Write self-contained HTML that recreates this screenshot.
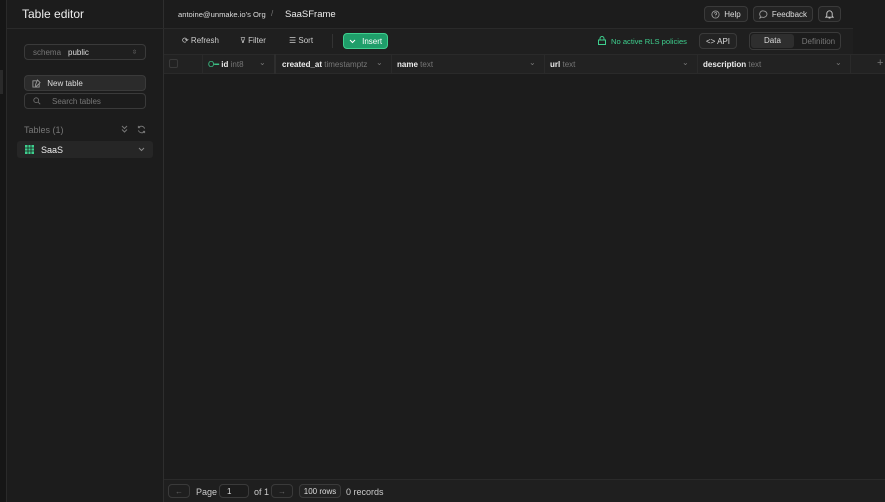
<!DOCTYPE html><html><head><style>
*{box-sizing:border-box;margin:0;padding:0}
body{width:885px;height:502px;overflow:hidden;background:#1c1c1c;font-family:"Liberation Sans",sans-serif;color:#ededed;position:relative;font-size:8px}
.a{position:absolute}
.btn{position:absolute;border:1px solid #3a3a3a;border-radius:4px;background:#232323;display:flex;align-items:center;justify-content:center;gap:4px;color:#ddd;font-size:8px}
.mut{color:#777}
</style></head><body>
<div class="a" style="left:0;top:0;width:7px;height:502px;background:#161616;border-right:1px solid #2a2a2a"></div>
<div class="a" style="left:0;top:70px;width:3px;height:24px;background:#2a2a2a"></div>
<div class="a" style="left:7px;top:0;width:157px;height:502px;background:#1c1c1c;border-right:1px solid #2e2e2e"></div>
<div class="a" style="left:7px;top:28px;width:157px;height:1px;background:#2a2a2a"></div>
<div class="a" style="left:22px;top:7px;font-size:12px;color:#eee">Table editor</div>
<div class="btn" style="left:24px;top:44px;width:122px;height:16px;justify-content:flex-start;padding-left:8px;gap:7px;background:#1f1f1f"><span class="mut">schema</span><span>public</span><span class="a mut" style="right:8px;font-size:6px">⇳</span></div>
<div class="btn" style="left:24px;top:75px;width:122px;height:16px;justify-content:flex-start;padding-left:7px;background:#2b2b2b"><svg width="9" height="9" viewBox="0 0 10 10"><path d="M8 5v4H1V2h4M6 1l3 3-4 4H4V6z" stroke="#999" fill="none" stroke-width="1"/></svg>&nbsp;New table</div>
<div class="btn" style="left:24px;top:93px;width:122px;height:16px;justify-content:flex-start;padding-left:8px;gap:11px;background:#1c1c1c"><svg width="8" height="8" viewBox="0 0 10 10"><circle cx="4" cy="4" r="3" stroke="#777" fill="none"/><path d="M6.5 6.5L9 9" stroke="#777"/></svg><span class="mut">Search tables</span></div>
<div class="a mut" style="left:24px;top:125px;font-size:9px">Tables (1)</div>
<svg class="a" style="left:121px;top:125px" width="7" height="8" viewBox="0 0 7 8"><path d="M1 1l2.5 2.5L6 1M1 4.5L3.5 7 6 4.5" stroke="#777" fill="none"/></svg>
<svg class="a" style="left:137px;top:125px" width="9" height="9" viewBox="0 0 10 10"><path d="M8.5 4A4 4 0 0 0 1.5 3M1.5 6a4 4 0 0 0 7 1M1.5 1v2h2M8.5 9V7h-2" stroke="#777" fill="none"/></svg>
<div class="a" style="left:17px;top:141px;width:136px;height:17px;background:#262626;border-radius:3px"></div>
<svg class="a" style="left:25px;top:145px" width="9" height="9" viewBox="0 0 9 9"><rect width="9" height="9" fill="#3ecf8e"/><path d="M0 3h9M0 6h9M3 0v9M6 0v9" stroke="#1c1c1c" stroke-width=".8"/></svg>
<div class="a" style="left:41px;top:145px;font-size:9px">SaaS</div>
<svg class="a" style="left:138px;top:147px" width="7" height="5" viewBox="0 0 7 5"><path d="M1 1l2.5 2.5L6 1" stroke="#888" fill="none"/></svg>
<div class="a" style="left:178px;top:10px;font-size:7.6px;color:#ddd">antoine@unmake.io's Org</div>
<div class="a mut" style="left:271px;top:9px">/</div>
<div class="a" style="left:285px;top:9px;font-size:9.5px">SaaSFrame</div>
<div class="btn" style="left:704px;top:6px;width:44px;height:16px"><svg width="9" height="9" viewBox="0 0 10 10"><circle cx="5" cy="5" r="4" stroke="#999" fill="none"/><path d="M3.8 4a1.2 1.2 0 1 1 1.2 1.3V6M5 7.3v.4" stroke="#999" fill="none"/></svg> Help</div>
<div class="btn" style="left:753px;top:6px;width:60px;height:16px"><svg width="9" height="9" viewBox="0 0 10 10"><path d="M5 1a4 3.6 0 1 1-2 6.8L1 9l.6-2.2A3.6 3.6 0 0 1 5 1z" stroke="#999" fill="none"/></svg> Feedback</div>
<div class="btn" style="left:818px;top:6px;width:23px;height:16px"><svg width="9" height="10" viewBox="0 0 10 11"><path d="M2 8V5a3 3 0 0 1 6 0v3l1 1H1zM4 10h2" stroke="#ccc" fill="none"/></svg></div>
<div class="a" style="left:164px;top:28px;width:689px;height:26px;background:#1f1f1f;border-top:1px solid #2a2a2a"></div>
<div class="a" style="left:182px;top:36px;color:#ccc">⟳ Refresh</div>
<div class="a" style="left:240px;top:36px;color:#ccc">⊽ Filter</div>
<div class="a" style="left:289px;top:36px;color:#ccc">☰ Sort</div>
<div class="a" style="left:332px;top:34px;width:1px;height:14px;background:#333"></div>
<div class="btn" style="left:343px;top:33px;width:45px;height:16px;background:#1f9e6a;border-color:#3ecf8e;color:#fff"><svg width="7" height="5" viewBox="0 0 7 5"><path d="M1 1l2.5 2.5L6 1" stroke="#fff" fill="none"/></svg>&nbsp;Insert</div>
<svg class="a" style="left:598px;top:36px" width="8" height="9" viewBox="0 0 8 9"><rect x=".5" y="4" width="7" height="4.5" stroke="#3ecf8e" fill="none"/><path d="M2 4V2.5a2 2 0 0 1 4 0V4" stroke="#3ecf8e" fill="none"/></svg>
<div class="a" style="left:611px;top:37px;color:#3ecf8e;font-size:7.6px">No active RLS policies</div>
<div class="btn" style="left:699px;top:33px;width:38px;height:16px">&lt;&gt; API</div>
<div class="btn" style="left:749px;top:32px;width:92px;height:18px;background:#1c1c1c;justify-content:flex-start;padding:1px"><div style="width:46px;height:14px;background:#2e2e2e;border-radius:3px;text-align:center;line-height:14px">Data</div><div class="mut" style="width:44px;text-align:center">Definition</div></div>
<div class="a" style="left:164px;top:54px;width:721px;height:20px;background:#222;border-top:1px solid #2a2a2a;border-bottom:1px solid #2a2a2a"></div>
<div class="a" style="left:169px;top:59px;width:9px;height:9px;border:1px solid #3a3a3a;border-radius:2px"></div>
<div class="a" style="left:202px;top:54px;width:1px;height:20px;background:#2a2a2a"></div>
<div class="a" style="left:208px;top:60px"><span style="color:#3ecf8e">O━</span> <b>id</b> <span class="mut">int8</span></div><div class="a mut" style="left:259px;top:58px">⌄</div>
<div class="a" style="left:274px;top:54px;width:2px;height:20px;background:#2e2e2e"></div>
<div class="a" style="left:282px;top:60px"><b>created_at</b> <span class="mut">timestamptz</span></div><div class="a mut" style="left:376px;top:58px">⌄</div>
<div class="a" style="left:391px;top:54px;width:1px;height:20px;background:#2a2a2a"></div>
<div class="a" style="left:397px;top:60px"><b>name</b> <span class="mut">text</span></div><div class="a mut" style="left:529px;top:58px">⌄</div>
<div class="a" style="left:544px;top:54px;width:1px;height:20px;background:#2a2a2a"></div>
<div class="a" style="left:550px;top:60px"><b>url</b> <span class="mut">text</span></div><div class="a mut" style="left:682px;top:58px">⌄</div>
<div class="a" style="left:697px;top:54px;width:1px;height:20px;background:#2a2a2a"></div>
<div class="a" style="left:703px;top:60px"><b>description</b> <span class="mut">text</span></div><div class="a mut" style="left:835px;top:58px">⌄</div>
<div class="a" style="left:850px;top:54px;width:1px;height:20px;background:#2a2a2a"></div>
<div class="a mut" style="left:877px;top:57px;font-size:11px">+</div>
<div class="a" style="left:164px;top:479px;width:721px;height:23px;background:#1f1f1f;border-top:1px solid #2a2a2a"></div>
<div class="btn" style="left:168px;top:484px;width:22px;height:14px;color:#666;background:#1f1f1f">←</div>
<div class="a" style="left:196px;top:487px;font-size:9px;color:#ccc">Page</div>
<div class="btn" style="left:219px;top:484px;width:30px;height:14px;justify-content:flex-start;padding-left:7px;background:#1c1c1c">1</div>
<div class="a" style="left:254px;top:487px;font-size:9px;color:#ccc">of 1</div>
<div class="btn" style="left:271px;top:484px;width:22px;height:14px;color:#666;background:#1f1f1f">→</div>
<div class="btn" style="left:299px;top:484px;width:42px;height:14px">100 rows</div>
<div class="a" style="left:346px;top:487px;font-size:9px;color:#ccc">0 records</div>
</body></html>
